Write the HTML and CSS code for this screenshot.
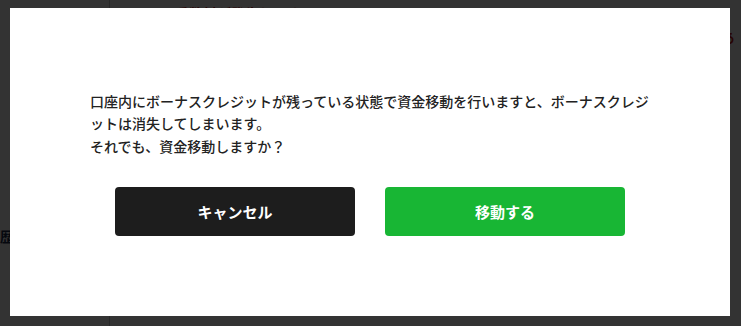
FILE: index.html
```html
<!DOCTYPE html>
<html lang="ja">
<head>
<meta charset="utf-8">
<title>資金移動</title>
<link rel="stylesheet" href="styles.css">
</head>
<body>
<div class="page">
  <aside class="sidebar">
    <div class="side-item side-item-top"></div>
    <div class="side-item">歴</div>
  </aside>
  <main class="main">
    <p class="note">手数料が発生します。</p>
    <p class="note note-wide">ボーナスクレジットの付与条件を満たした場合でも、所定の期間内に取引を行う必要があります。</p>
  </main>
</div>
<div class="overlay"></div>
<div class="modal" role="dialog">
  <p class="modal-text">口座内にボーナスクレジットが残っている状態で資金移動を行いますと、ボーナスクレジットは消失してしまいます。<br>それでも、資金移動しますか？</p>
  <div class="modal-actions">
    <button class="btn btn-cancel" type="button">キャンセル</button>
    <button class="btn btn-ok" type="button">移動する</button>
  </div>
</div>
</body>
</html>
```
FILE: styles.css
```css
html, body {
  margin: 0;
  padding: 0;
  height: 100%;
  overflow: hidden;
  background: #fff;
  font-family: "Noto Sans CJK JP", "Noto Sans", sans-serif;
}

.page {
  display: flex;
  height: 100%;
}

.sidebar {
  width: 109px;
  flex: none;
  border-right: 1px solid #c8c8c8;
  display: flex;
  flex-direction: column;
}

.side-item {
  font-size: 14px;
  line-height: 20px;
  color: #1a2a4a;
  font-weight: 700;
}

.side-item-top {
  height: 226px;
}

.main {
  flex: 1;
  padding: 0 0 0 65px;
  min-width: 0;
  overflow: hidden;
}

.note {
  margin: 0;
  font-size: 14px;
  line-height: 20px;
  color: #c41818;
  font-weight: 700;
}

.note:first-child {
  padding-top: 3px;
}

.note-wide {
  margin-top: 4px;
}

.overlay {
  position: fixed;
  inset: 0;
  background: rgba(0, 0, 0, 0.8);
}

.modal {
  position: absolute;
  left: 10px;
  top: 8px;
  width: 720px;
  height: 308px;
  box-sizing: border-box;
  background: #fff;
  padding: 82px 80px 80px;
  display: flex;
  flex-direction: column;
}

.modal-text {
  margin: 0;
  font-size: 14px;
  line-height: 22.4px;
  font-weight: 500;
  color: #222;
}

.modal-actions {
  margin-top: 30px;
  display: flex;
  gap: 30px;
  padding-left: 25px;
}

.btn {
  width: 240px;
  height: 49px;
  border: none;
  border-radius: 4px;
  font-family: inherit;
  font-size: 15px;
  font-weight: 700;
  color: #fff;
  cursor: pointer;
}

.btn-cancel {
  background: #1d1d1d;
}

.btn-ok {
  background: #18b634;
}
```
